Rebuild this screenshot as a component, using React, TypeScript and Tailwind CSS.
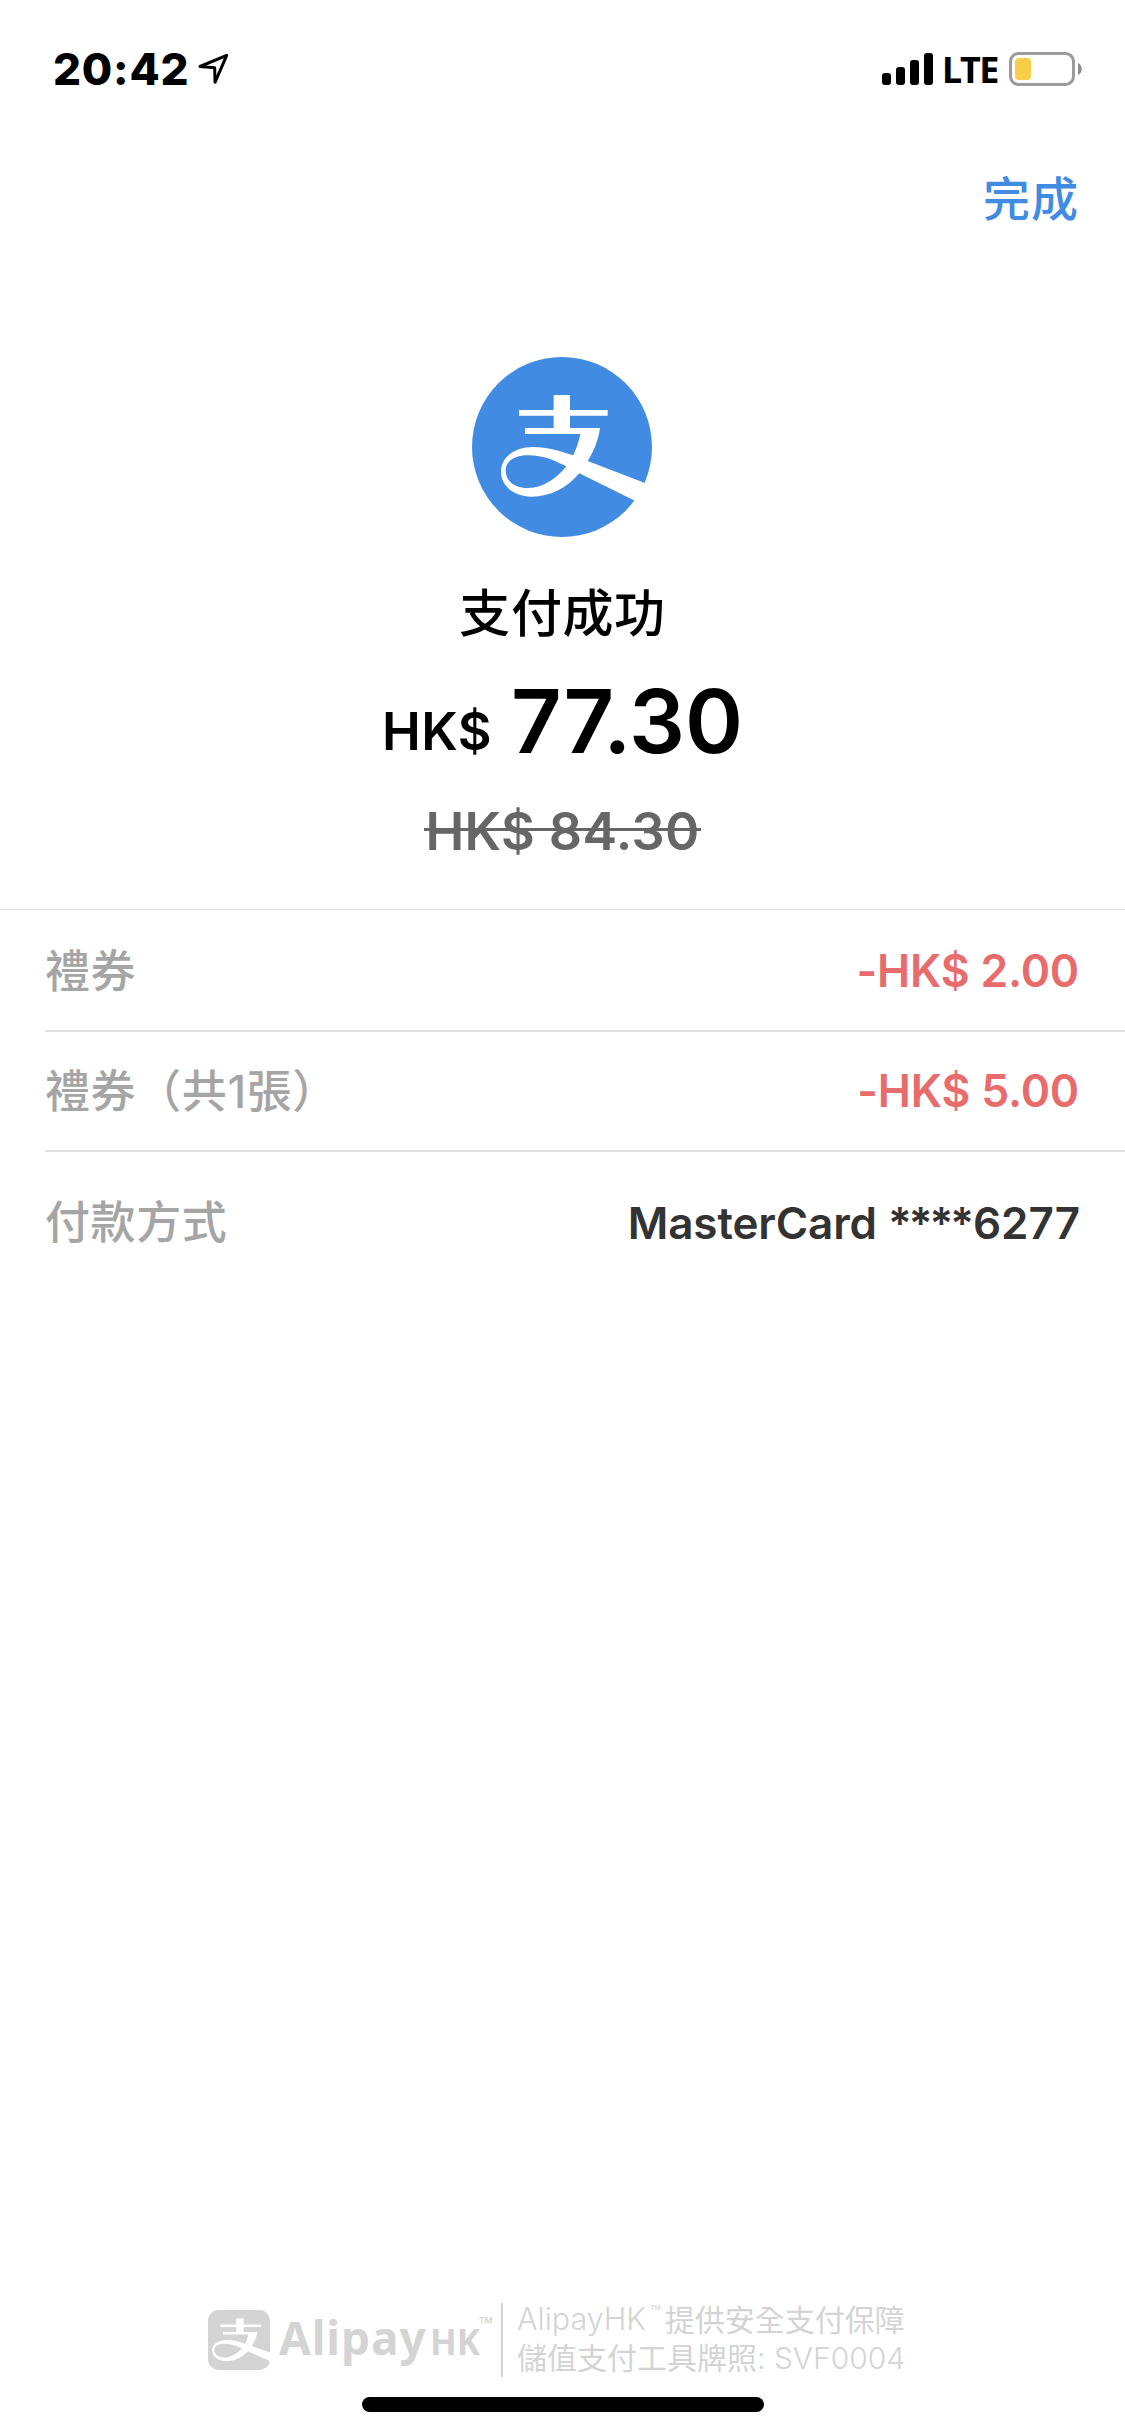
const LOGO_GLYPH =
  'M341 165H390V210H503V227H390V264H480C475 300 463 330 443 363L680 454L660 520L418 400C380 445 330 470 275 470C220 470 183 436 183 395C183 350 225 321 280 321C322 321 360 333 400 346C409 325 417 305 421 282H255V264H341V227H237V210H341ZM379 379C350 415 310 444 265 444C225 444 197 425 197 390C197 362 225 346 265 346C310 346 345 362 379 379Z';

interface DetailRow {
  label: string;
  value: string;
}

const COUPONS: DetailRow[] = [
  { label: '禮券', value: '-HK$ 2.00' },
  { label: '禮券（共1張）', value: '-HK$ 5.00' },
];

function StatusBar() {
  return (
    <header className="flex h-[138px] items-center justify-between pr-[42px] pl-[53px]">
      <div className="flex items-center gap-[11px]">
        <span className="w-[135px] text-[44px] leading-none font-extrabold tracking-[0.8px] whitespace-nowrap">
          20:42
        </span>
        <svg className="mr-auto -ml-px h-[32px] w-[32px]" viewBox="198 53 32 32" fill="none">
          <path
            d="M226.7 55.3L200 66.5L214.7 67.7L215 82.3Z"
            stroke="black"
            strokeWidth="3"
            strokeLinejoin="round"
          />
        </svg>
      </div>
      <div className="flex items-center">
        <svg className="h-[32px] w-[51px]" viewBox="0 0 51 32">
          <rect x="0" y="20" width="9" height="12" rx="3" />
          <rect x="14" y="14" width="9" height="18" rx="3" />
          <rect x="28" y="7" width="9" height="25" rx="3" />
          <rect x="42" y="0" width="9" height="32" rx="3" />
        </svg>
        <span className="mt-px ml-[9px] w-[67px] font-['Noto_Sans'] text-[36px] leading-none font-bold tracking-[-1.5px]">
          LTE
        </span>
        <svg className="h-[34px] w-[74px]" viewBox="0 0 74 34" fill="none">
          <rect x="1.5" y="1.5" width="63" height="31" rx="8" stroke="#9b9b9b" strokeWidth="3" />
          <rect x="6" y="6" width="16" height="22" rx="4" fill="#f8ce46" />
          <path d="M69 11C74 13 74 21 69 23Z" fill="#8c8c8c" />
        </svg>
      </div>
    </header>
  );
}

function AlipayLogo() {
  return (
    <svg className="mr-px h-[180px] w-[180px]" viewBox="96 51 540 540">
      <circle cx="366" cy="321" r="270" fill="#418ce2" />
      <path d={LOGO_GLYPH} fill="white" fillRule="evenodd" />
    </svg>
  );
}

function Row({ label, value }: DetailRow) {
  return (
    <li className="ml-[45px] flex h-[120px] items-center justify-between border-b-2 border-[#e0e0e0] pr-[46px] leading-none">
      <span className="text-[45px] font-medium tracking-[0.6px] text-[#a5a5a5]">{label}</span>
      <span className="text-[44.5px] font-semibold tracking-[-0.2px] text-[#e86c6c]">{value}</span>
    </li>
  );
}

function Footer() {
  return (
    <footer className="mt-auto text-[#d4d4d4]">
      <div className="flex h-[74px] items-center pl-[208px]">
        <svg className="h-[60px] w-[62px]" viewBox="85 88 185 179">
          <rect x="85" y="88" width="185" height="179" rx="32" fill="currentColor" />
          <path
            d={LOGO_GLYPH}
            transform="translate(14 43) scale(0.455 0.42)"
            fill="white"
            fillRule="evenodd"
          />
        </svg>
        <div className="ml-[9px] flex h-[60px] w-[222px] items-baseline font-['Noto_Sans'] leading-[55px] font-bold">
          <span className="w-[151px] text-[46px] tracking-[0.9px]">Alipay</span>
          <span className="w-[49px] text-[35px]">HK</span>
          <span className="self-start text-[18px] leading-[26px] font-normal">™</span>
        </div>
        <div className="h-[74px] w-[2px] bg-[#d4d4d4]" />
        <div className="ml-[14px] text-[30.5px] font-light whitespace-nowrap">
          <p className="flex h-[38px] items-center pb-[3px] leading-none">
            AlipayHK
            <span className="mx-[4px] mb-[14px] text-[18px]">™</span>
            <span className="text-[30px] font-normal">提供安全支付保障</span>
          </p>
          <p className="h-[38px] text-[30px] leading-[36px]">
            <span className="font-normal">儲值支付工具牌照</span>: SVF0004
          </p>
        </div>
      </div>
      <div className="mx-auto mt-[20px] mb-[24px] h-[15px] w-[402px] rounded-full bg-black" />
    </footer>
  );
}

export default function App() {
  return (
    <div className="flex h-[2436px] w-[1125px] flex-col bg-white font-['Inter','Noto_Sans_CJK_TC',sans-serif] text-black">
      <StatusBar />
      <nav className="flex h-[120px] items-center justify-end pr-[46px]">
        <button className="text-[47px] leading-none font-medium tracking-[1px] text-[#418ce2]">完成</button>
      </nav>

      <main>
        <section className="flex h-[652px] flex-col items-center border-b border-[#e0e0e0] pt-[99px]">
          <AlipayLogo />
          <h1 className="mt-[47px] text-[51px] leading-[60px] font-medium tracking-[0.6px]">支付成功</h1>
          <p className="mt-[33px] flex h-[88px] items-baseline leading-[88px] font-semibold">
            <span className="relative bottom-[3px] mr-[19px] text-[52px] tracking-[0.5px]">HK$</span>
            <span className="text-[88px]">77.30</span>
          </p>
          <p className="relative mt-[37px] px-px text-[52px] leading-[60px] font-semibold tracking-[0.4px] text-[#666]">
            HK$ 84.30
            <span className="absolute top-[26px] left-0 h-[3px] w-full bg-[#666]" />
          </p>
        </section>

        <ul className="pt-[2px]">
          {COUPONS.map((c) => (
            <Row key={c.value} label={c.label} value={c.value} />
          ))}
        </ul>

        <div className="flex h-[141px] items-center justify-between pr-[45px] pl-[45px] leading-none">
          <span className="text-[45px] font-medium tracking-[0.6px] text-[#a5a5a5]">付款方式</span>
          <span className="text-[44px] font-semibold text-[#333]">
            <span className="tracking-[-0.1px]">MasterCard </span>
            <span className="tracking-[-3px]">****</span>
            <span className="ml-[2px]">6277</span>
          </span>
        </div>
      </main>

      <Footer />
    </div>
  );
}
